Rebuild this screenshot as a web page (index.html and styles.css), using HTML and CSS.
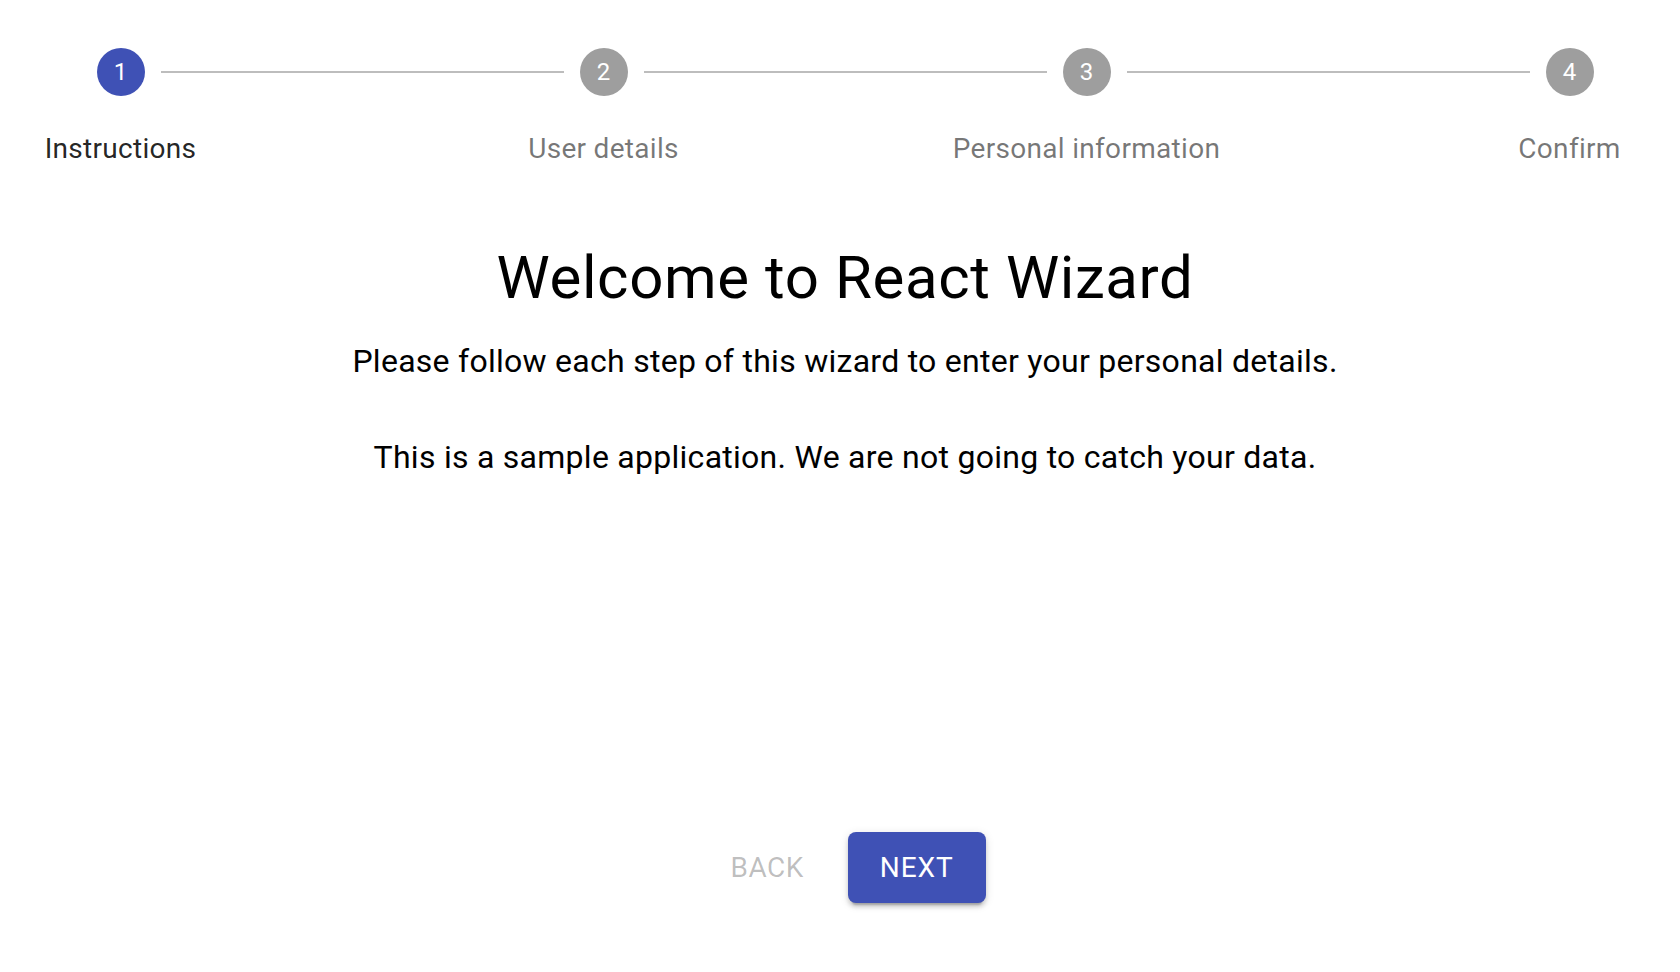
FILE: index.html
```html
<!DOCTYPE html>
<html lang="en">
<head>
<meta charset="utf-8">
<title>React Wizard</title>
<link rel="stylesheet" href="styles.css">
</head>
<body>
<div class="app">
  <div class="stepper">
    <div class="step active">
      <div class="step-top">
        <span class="line hidden"></span>
        <span class="circle">1</span>
        <span class="line"></span>
      </div>
      <div class="label">Instructions</div>
    </div>
    <div class="step">
      <div class="step-top">
        <span class="line"></span>
        <span class="circle">2</span>
        <span class="line"></span>
      </div>
      <div class="label">User details</div>
    </div>
    <div class="step">
      <div class="step-top">
        <span class="line"></span>
        <span class="circle">3</span>
        <span class="line"></span>
      </div>
      <div class="label">Personal information</div>
    </div>
    <div class="step">
      <div class="step-top">
        <span class="line"></span>
        <span class="circle">4</span>
        <span class="line hidden"></span>
      </div>
      <div class="label">Confirm</div>
    </div>
  </div>

  <main class="content">
    <h1 class="title">Welcome to React Wizard</h1>
    <p class="text">Please follow each step of this wizard to enter your personal details.</p>
    <p class="text">This is a sample application. We are not going to catch your data.</p>
  </main>

  <div class="actions">
    <button class="btn btn-back" disabled>Back</button>
    <button class="btn btn-next">Next</button>
  </div>
</div>
</body>
</html>
```

FILE: styles.css
```css
html, body {
  margin: 0;
  padding: 0;
  background: #ffffff;
}

body {
  font-family: Roboto, "Liberation Sans", Arial, sans-serif;
  color: rgba(0, 0, 0, 0.87);
  width: 1680px;
  height: 972px;
  overflow: hidden;
}

.app {
  display: flex;
  flex-direction: column;
}

.stepper {
  display: flex;
  justify-content: center;
  padding: 48px 0 0 10px;
  overflow: hidden;
}

.step {
  flex: 0 0 483px;
  display: flex;
  flex-direction: column;
  align-items: center;
}

.step-top {
  width: 100%;
  display: flex;
  align-items: center;
  gap: 16px;
}

.line {
  flex: 1;
  height: 2px;
  background: #bdbdbd;
}

.line.hidden {
  visibility: hidden;
}

.circle {
  flex: 0 0 48px;
  width: 48px;
  height: 48px;
  border-radius: 50%;
  background: #9e9e9e;
  color: #ffffff;
  font-size: 24px;
  line-height: 48px;
  text-align: center;
}

.step.active .circle {
  background: #3f51b5;
}

.label {
  margin-top: 33px;
  font-size: 28px;
  line-height: 40px;
  letter-spacing: 0.3px;
  color: rgba(0, 0, 0, 0.54);
  white-space: nowrap;
}

.step.active .label {
  color: rgba(0, 0, 0, 0.87);
}

.content {
  text-align: center;
  color: #000000;
  padding-left: 10px;
}

.title {
  margin: 72px 0 0;
  font-size: 60px;
  line-height: 74px;
  font-weight: 400;
  letter-spacing: 0.6px;
}

.text {
  margin: 22px 0 0;
  font-size: 32px;
  line-height: 48px;
  letter-spacing: 0.27px;
}

.text + .text {
  margin-top: 48px;
}

.actions {
  display: flex;
  justify-content: center;
  gap: 12px;
  margin-top: 351px;
  padding-left: 4px;
}

.btn {
  font-family: Roboto, "Liberation Sans", Arial, sans-serif;
  font-size: 28px;
  font-weight: 400;
  letter-spacing: 0.5px;
  text-transform: uppercase;
  line-height: 47px;
  padding: 12px 32px;
  border: 0;
  border-radius: 8px;
  min-width: 128px;
  background: transparent;
  cursor: pointer;
}

.btn-back {
  color: rgba(0, 0, 0, 0.26);
  cursor: default;
}

.btn-next {
  color: #ffffff;
  background: #3f51b5;
  letter-spacing: 0.9px;
  box-shadow: 0 6px 2px -4px rgba(0, 0, 0, 0.2),
              0 4px 4px 0 rgba(0, 0, 0, 0.14),
              0 2px 10px 0 rgba(0, 0, 0, 0.12);
}
```
